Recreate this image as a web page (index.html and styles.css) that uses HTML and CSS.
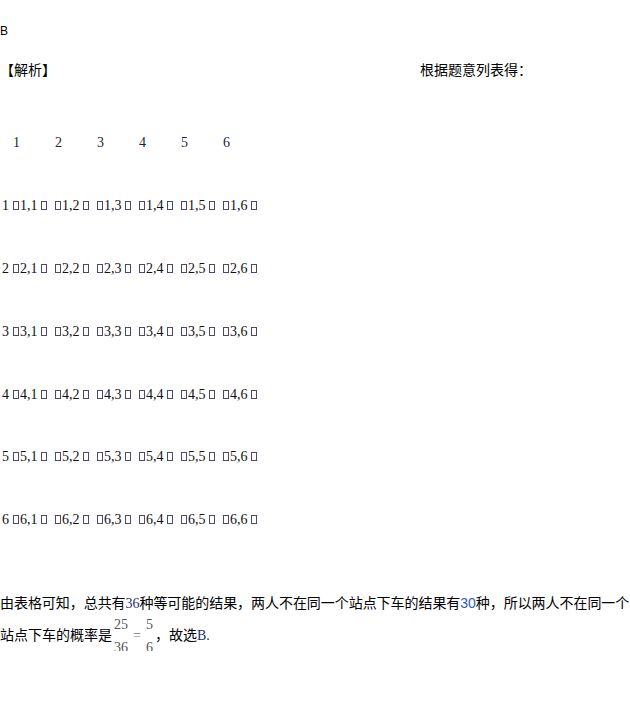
FILE: index.html
```html
<!DOCTYPE html>
<html lang="zh">
<head>
  <meta charset="UTF-8" />
  <title>解析</title>
  <link rel="stylesheet" href="styles.css">
</head>
<body>
  <div class="answer">B</div>

  <div class="heading">
    <span class="tag">【解析】</span>
    <span class="lead">根据题意列表得：</span>
  </div>

  <div class="grid">
    <span></span>
    <span class="head">1</span><span class="head">2</span><span class="head">3</span>
    <span class="head">4</span><span class="head">5</span><span class="head">6</span>

    <span class="label">1</span>
    <span><i class="tofu"></i>1,1<i class="tofu end"></i></span>
    <span><i class="tofu"></i>1,2<i class="tofu end"></i></span>
    <span><i class="tofu"></i>1,3<i class="tofu end"></i></span>
    <span><i class="tofu"></i>1,4<i class="tofu end"></i></span>
    <span><i class="tofu"></i>1,5<i class="tofu end"></i></span>
    <span><i class="tofu"></i>1,6<i class="tofu end"></i></span>

    <span class="label">2</span>
    <span><i class="tofu"></i>2,1<i class="tofu end"></i></span>
    <span><i class="tofu"></i>2,2<i class="tofu end"></i></span>
    <span><i class="tofu"></i>2,3<i class="tofu end"></i></span>
    <span><i class="tofu"></i>2,4<i class="tofu end"></i></span>
    <span><i class="tofu"></i>2,5<i class="tofu end"></i></span>
    <span><i class="tofu"></i>2,6<i class="tofu end"></i></span>

    <span class="label">3</span>
    <span><i class="tofu"></i>3,1<i class="tofu end"></i></span>
    <span><i class="tofu"></i>3,2<i class="tofu end"></i></span>
    <span><i class="tofu"></i>3,3<i class="tofu end"></i></span>
    <span><i class="tofu"></i>3,4<i class="tofu end"></i></span>
    <span><i class="tofu"></i>3,5<i class="tofu end"></i></span>
    <span><i class="tofu"></i>3,6<i class="tofu end"></i></span>

    <span class="label">4</span>
    <span><i class="tofu"></i>4,1<i class="tofu end"></i></span>
    <span><i class="tofu"></i>4,2<i class="tofu end"></i></span>
    <span><i class="tofu"></i>4,3<i class="tofu end"></i></span>
    <span><i class="tofu"></i>4,4<i class="tofu end"></i></span>
    <span><i class="tofu"></i>4,5<i class="tofu end"></i></span>
    <span><i class="tofu"></i>4,6<i class="tofu end"></i></span>

    <span class="label">5</span>
    <span><i class="tofu"></i>5,1<i class="tofu end"></i></span>
    <span><i class="tofu"></i>5,2<i class="tofu end"></i></span>
    <span><i class="tofu"></i>5,3<i class="tofu end"></i></span>
    <span><i class="tofu"></i>5,4<i class="tofu end"></i></span>
    <span><i class="tofu"></i>5,5<i class="tofu end"></i></span>
    <span><i class="tofu"></i>5,6<i class="tofu end"></i></span>

    <span class="label">6</span>
    <span><i class="tofu"></i>6,1<i class="tofu end"></i></span>
    <span><i class="tofu"></i>6,2<i class="tofu end"></i></span>
    <span><i class="tofu"></i>6,3<i class="tofu end"></i></span>
    <span><i class="tofu"></i>6,4<i class="tofu end"></i></span>
    <span><i class="tofu"></i>6,5<i class="tofu end"></i></span>
    <span><i class="tofu"></i>6,6<i class="tofu end"></i></span>
  </div>

  <p class="para"><span class="first">由表格可知，总共有<span class="num">36</span>种等可能的结果，两人不在同一个站点下车的结果有<span class="num-sans">30</span>种，所以两人不在同一个</span><br>站点下车的概率是<span class="frac"><span>25</span><span>36</span></span><span class="eq">=</span><span class="frac"><span>5</span><span>6</span></span>，故选<span class="num">B.</span></p>
</body>
</html>
```

FILE: styles.css
```css
body {
  margin: 0;
  font-family: "Liberation Serif", "Noto Sans CJK SC", serif;
  font-size: 14px;
  color: #000;
  background: #fff;
}

.answer {
  font-family: "Liberation Sans", sans-serif;
  font-size: 12px;
  line-height: 20px;
  margin-top: 21px;
}

.heading {
  display: flex;
  margin-top: 18px;
  line-height: 20px;
  font-family: "Noto Sans CJK SC", sans-serif;
}

.heading .tag {
  width: 420px;
}

.grid {
  display: grid;
  grid-template-columns: 13px repeat(6, 42px);
  grid-auto-rows: 62.8px;
  line-height: 62.8px;
  margin-top: 33.4px;
  color: #111;
  white-space: nowrap;
}

.grid .label {
  padding-left: 2px;
}

.grid .head {
  color: #1a1f3a;
}

.tofu {
  display: inline-block;
  width: 6px;
  height: 9px;
  box-sizing: border-box;
  border: 1px solid #4a4a70;
  margin-right: 1px;
}

.tofu.end {
  margin-left: 3px;
  margin-right: 0;
}

.para {
  margin: 35.5px 0 0;
  font-family: "Noto Sans CJK SC", sans-serif;
  line-height: 31px;
  white-space: nowrap;
}

.para .first {
  letter-spacing: -0.05px;
}

.num {
  font-family: "Liberation Serif", serif;
  color: #1d2f6e;
}

.num-sans {
  font-family: "Liberation Sans", sans-serif;
  color: #2a5bbf;
}

.frac {
  display: inline-flex;
  flex-direction: column;
  align-items: center;
  gap: 9px;
  vertical-align: middle;
  margin: -4px 1px;
  padding: 0 1px;
  font-family: "Liberation Serif", serif;
  font-size: 14px;
  line-height: 14px;
  color: #555;
}

.eq {
  font-family: "Liberation Serif", serif;
  font-size: 14px;
  color: #777;
  margin: 0 3px;
}
```
